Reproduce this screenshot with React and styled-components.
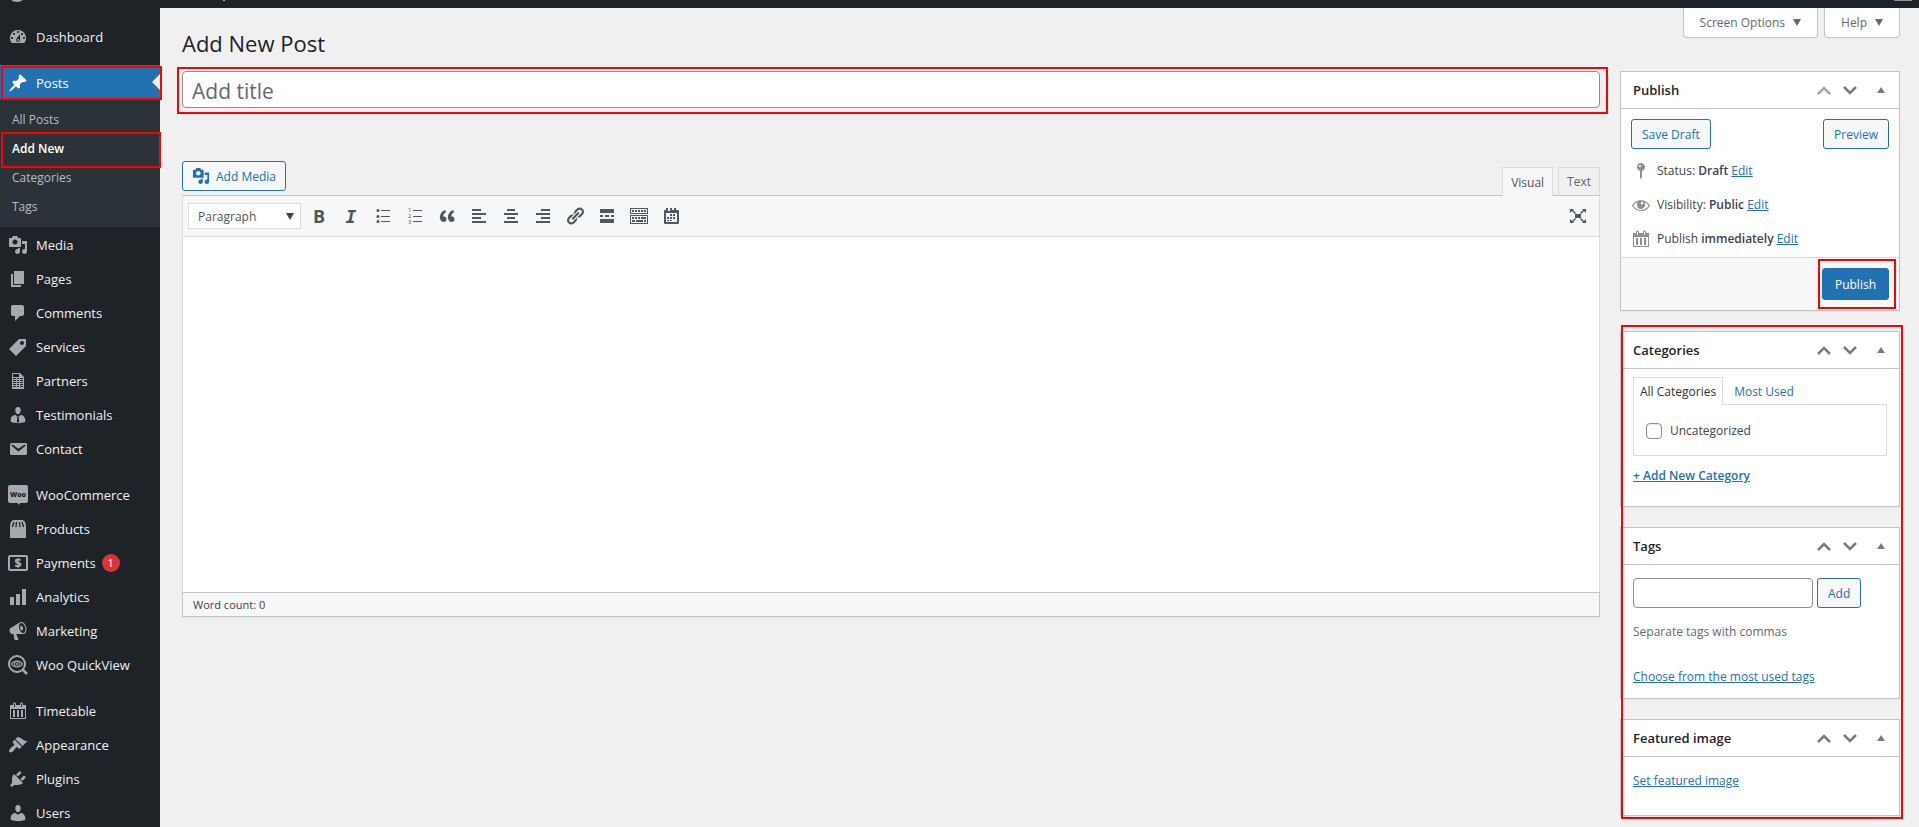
import { useState } from "react";
import styled, { createGlobalStyle, css } from "styled-components";

const BLUE = "#2271b1";
const DARK = "#1d2327";
const LINE = "#c3c4c7";
const SOFT_LINE = "#dcdcde";

const GlobalStyle = createGlobalStyle`
    * {
        box-sizing: border-box;
    }
    body {
        margin: 0;
        background-color: #f0f0f1;
        color: #3c434a;
        font-family: "Open Sans", "Noto Sans", sans-serif;
        font-size: 12px;
        line-height: 20px;
    }
    button,
    input,
    select,
    textarea {
        font-family: inherit;
        font-size: inherit;
        color: inherit;
        margin: 0;
    }
    button {
        cursor: pointer;
    }
    a {
        color: ${BLUE};
    }
    ul,
    h1,
    h2,
    p {
        margin: 0;
        padding: 0;
        list-style: none;
    }
`;

const Page = styled.div`
    height: 100vh;
    overflow: hidden;
`;

const AdminBar = styled.div`
    display: flex;
    justify-content: space-between;
    height: 8px;
    padding: 0 7px 0 10px;
    background-color: ${DARK};
    svg {
        display: block;
    }
`;

const Shell = styled.div`
    display: grid;
    grid-template-columns: 160px minmax(0, 1fr);
    align-items: start;
`;

const Sidebar = styled.nav`
    min-height: 100vh;
    padding-top: 11px;
    background-color: ${DARK};
`;

const MenuGroup = styled.ul`
    margin-bottom: 12px;
`;

const MenuItem = styled.li`
    position: relative;
`;

const MenuLink = styled.a`
    position: relative;
    display: flex;
    align-items: center;
    gap: 8px;
    height: 34px;
    padding-top: 1px;
    padding-left: 8px;
    font-size: 13px;
    text-decoration: none;
    color: ${(props) => (props.$active ? "#fff" : "#f0f0f1")};
    background-color: ${(props) => (props.$active ? BLUE : "transparent")};
    svg {
        flex: none;
        color: ${(props) => (props.$active ? "#fff" : "#a7aaad")};
    }
`;

const Notch = styled.span`
    position: absolute;
    right: 0;
    top: 9px;
    border: 8px solid transparent;
    border-right-color: #f0f0f1;
    border-left-width: 0;
`;

const Count = styled.span`
    width: 18px;
    margin-left: -2px;
    border-radius: 9px;
    background-color: #d63638;
    color: #fff;
    font-size: 11px;
    line-height: 18px;
    text-align: center;
`;

const SubMenu = styled.ul`
    padding: 6px 0;
    background-color: #2c3338;
`;

const SubItem = styled.li`
    position: relative;
    a {
        display: block;
        padding-left: 12px;
        font-size: 12px;
        line-height: 29px;
        text-decoration: none;
        color: ${(props) => (props.$current ? "#fff" : "#b5bcc2")};
        font-weight: ${(props) => (props.$current ? 600 : 400)};
    }
`;

// red frame laid over whatever it calls attention to
const Mark = styled.span`
    position: absolute;
    inset: ${(props) => props.$inset};
    border: 2px solid #f00;
    pointer-events: none;
    z-index: 2;
`;

const Marked = styled.div`
    position: relative;
`;

const Main = styled.main`
    padding: 0 19px 0 22px;
`;

const PageHead = styled.header`
    display: flex;
    justify-content: space-between;
    align-items: flex-start;
    margin-bottom: 13px;
    h1 {
        margin-top: 20px;
        font-size: 22px;
        font-weight: 400;
        line-height: 30px;
        color: ${DARK};
    }
`;

const ScreenMeta = styled.div`
    display: flex;
    gap: 6px;
`;

const MetaButton = styled.button`
    display: flex;
    align-items: center;
    gap: 8px;
    height: 30px;
    padding: 0 16px;
    border: 1px solid ${LINE};
    border-top: none;
    border-radius: 0 0 4px 4px;
    background-color: #fff;
    color: #646970;
`;

const Columns = styled.div`
    display: grid;
    grid-template-columns: minmax(0, 1fr) 280px;
    gap: 20px;
    align-items: start;
`;

const TitleInput = styled.input`
    display: block;
    width: 100%;
    height: 37px;
    padding: 2px 9px 0;
    border: 1px solid #8c8f94;
    border-radius: 4px;
    background-color: #fff;
    font-size: 21px;
    &::placeholder {
        color: #646970;
        opacity: 1;
    }
`;

const EditorTools = styled.div`
    display: flex;
    justify-content: space-between;
    align-items: flex-end;
    margin-top: 53px;
`;

const Button = styled.button`
    display: inline-flex;
    align-items: center;
    justify-content: center;
    gap: 6px;
    height: 30px;
    padding: 0 10px;
    border: 1px solid ${BLUE};
    border-radius: 3px;
    background-color: #f6f7f7;
    color: ${BLUE};
    font-size: 12px;
    ${(props) =>
        props.$primary &&
        css`
            height: 32px;
            padding: 0 12px;
            background-color: ${BLUE};
            color: #fff;
        `}
`;

const MediaButton = styled(Button)`
    margin-bottom: 4px;
    padding: 0 9px;
`;

const Tabs = styled.div`
    display: flex;
    align-items: flex-start;
    gap: 5px;
    height: 28px;
`;

const Tab = styled.button`
    position: relative;
    height: ${(props) => (props.$on ? 29 : 28)}px;
    padding: 0 8px;
    border: 1px solid ${SOFT_LINE};
    border-bottom: none;
    background-color: ${(props) => (props.$on ? "#f6f7f7" : "#f0f0f1")};
    color: ${(props) => (props.$on ? "#50575e" : "#646970")};
`;

const Editor = styled.div`
    border: 1px solid ${SOFT_LINE};
    border-top-color: ${LINE};
    border-bottom: none;
`;

const Toolbar = styled.div`
    display: flex;
    align-items: center;
    height: 41px;
    padding: 0 5px;
    border-bottom: 1px solid ${SOFT_LINE};
    background-color: #f6f7f7;
`;

const FormatField = styled.label`
    position: relative;
    display: block;
    margin-right: 2px;
    select {
        appearance: none;
        display: block;
        width: 113px;
        height: 26px;
        padding: 0 9px;
        border: 1px solid ${SOFT_LINE};
        border-radius: 0;
        background-color: #fff;
        color: #50575e;
    }
    svg {
        position: absolute;
        right: 7px;
        top: 10px;
        pointer-events: none;
    }
`;

const ToolButton = styled.button`
    display: flex;
    align-items: center;
    justify-content: center;
    width: 32px;
    height: 30px;
    padding: 0;
    border: none;
    background: none;
    color: #50575e;
    &:last-child {
        margin-left: auto;
    }
`;

const BoldGlyph = styled.span`
    font-size: 18px;
    font-weight: 700;
`;

const ItalicGlyph = styled.span`
    font-family: "DejaVu Sans Mono", monospace;
    font-size: 18px;
    font-weight: 700;
    font-style: italic;
`;

const Canvas = styled.textarea`
    display: block;
    width: 100%;
    height: 355px;
    padding: 12px;
    border: none;
    outline: none;
    resize: none;
    background-color: #fff;
`;

const StatusBar = styled.div`
    padding: 2px 10px 1px;
    border: 1px solid ${LINE};
    background-color: #f6f7f7;
    font-size: 11px;
    box-shadow: 0 1px 1px rgba(0, 0, 0, 0.04);
`;

const SideColumn = styled.div`
    display: grid;
    gap: 20px;
`;

const BoxGroup = styled(SideColumn)`
    position: relative;
`;

const Postbox = styled.section`
    border: 1px solid ${LINE};
    background-color: #fff;
    box-shadow: 0 1px 1px rgba(0, 0, 0, 0.04);
`;

const BoxHead = styled.header`
    display: flex;
    align-items: center;
    height: 37px;
    padding-left: 12px;
    border-bottom: 1px solid ${LINE};
    h2 {
        flex: 1;
        font-size: 13px;
        font-weight: 600;
        color: ${DARK};
    }
`;

const HandleButton = styled.button`
    display: flex;
    align-items: center;
    justify-content: center;
    width: ${(props) => (props.$wide ? 36 : 26)}px;
    height: 36px;
    padding: 0;
    border: none;
    background: none;
    color: #787c82;
    &:disabled {
        color: #a7aaad;
    }
`;

const PublishBody = styled.div`
    padding: 10px 10px 1px;
`;

const PublishActions = styled.div`
    display: flex;
    justify-content: space-between;
    margin-bottom: 5px;
`;

const PublishRow = styled.div`
    display: flex;
    align-items: center;
    gap: 6px;
    height: 34px;
    b {
        font-weight: 600;
    }
    svg {
        color: #8c8f94;
    }
`;

const PublishFoot = styled.footer`
    display: flex;
    justify-content: flex-end;
    padding: 10px;
    border-top: 1px solid ${SOFT_LINE};
    background-color: #f6f7f7;
`;

const CategoryBody = styled.div`
    padding: 8px 12px 20px;
`;

const CategoryTabs = styled.div`
    display: flex;
    height: 27px;
`;

const CategoryTab = styled.button`
    position: relative;
    height: 28px;
    padding: 0 6px;
    border: 1px solid ${(props) => (props.$on ? SOFT_LINE : "transparent")};
    border-bottom: none;
    background-color: ${(props) => (props.$on ? "#fff" : "transparent")};
    color: ${(props) => (props.$on ? "#2c3338" : BLUE)};
    & + & {
        margin-left: 4px;
    }
`;

const CategoryPanel = styled.div`
    display: flex;
    align-items: center;
    height: 52px;
    margin-bottom: 10px;
    padding: 2px 12px 0;
    border: 1px solid ${SOFT_LINE};
    label {
        display: flex;
        align-items: center;
        gap: 8px;
    }
`;

const AddCategory = styled.a`
    font-weight: 600;
`;

const Checkbox = styled.input`
    appearance: none;
    width: 16px;
    height: 16px;
    border: 1px solid #8c8f94;
    border-radius: 4px;
    background-color: #fff;
    box-shadow: inset 0 1px 2px rgba(0, 0, 0, 0.1);
    &:checked {
        background-color: ${BLUE};
    }
`;

const TagsBody = styled.div`
    padding: 13px 12px 11px;
`;

const TagForm = styled.div`
    display: flex;
    gap: 4px;
`;

const TagInput = styled.input`
    width: 180px;
    height: 30px;
    padding: 0 8px;
    border: 1px solid #8c8f94;
    border-radius: 4px;
    background-color: #fff;
`;

const Hint = styled.p`
    margin: 14px 0 25px;
    color: #646970;
`;

const ImageBody = styled.div`
    padding: 14px 12px 24px;
`;

const Svg = ({ size = 20, children }) => (
    <svg width={size} height={size} viewBox="0 0 20 20" fill="currentColor" aria-hidden="true">
        {children}
    </svg>
);

const PATHS = {
    dashboard:
        "M3.76 16h12.48A7.998 7.998 0 0 0 10 3a7.998 7.998 0 0 0-6.24 13zM10 4c.55 0 1 .45 1 1s-.45 1-1 1-1-.45-1-1 .45-1 1-1zM6 6c.55 0 1 .45 1 1s-.45 1-1 1-1-.45-1-1 .45-1 1-1zm8 0c.55 0 1 .45 1 1s-.45 1-1 1-1-.45-1-1 .45-1 1-1zm-5.37 5.55L12 7v6c0 1.1-.9 2-2 2s-2-.9-2-2c0-.57.24-1.08.63-1.45zM4 10c.55 0 1 .45 1 1s-.45 1-1 1-1-.45-1-1 .45-1 1-1zm12 0c.55 0 1 .45 1 1s-.45 1-1 1-1-.45-1-1 .45-1 1-1zm-5 3c0-.55-.45-1-1-1s-1 .45-1 1 .45 1 1 1 1-.45 1-1z",
    pin: "M10.44 3.02l1.82-1.82 6.36 6.35-1.83 1.82c-1.05-.68-2.48-.57-3.41.36l-.75.75c-.92.93-1.04 2.35-.35 3.41l-1.83 1.82-2.41-2.41-2.8 2.79c-.42.42-3.38 2.71-3.8 2.29s1.86-3.39 2.28-3.81l2.79-2.79L4.1 9.36l1.83-1.82c1.05.69 2.48.57 3.4-.36l.75-.75c.93-.92 1.05-2.35.36-3.41z",
    media: "M13 11V4c0-.55-.45-1-1-1h-1.67L9 1H5L3.67 3H2c-.55 0-1 .45-1 1v7c0 .55.45 1 1 1h10c.55 0 1-.45 1-1zM7 4.5c1.38 0 2.5 1.12 2.5 2.5S8.38 9.5 7 9.5 4.5 8.38 4.5 7 5.62 4.5 7 4.5zM14 6h5v10.5c0 1.38-1.12 2.5-2.5 2.5S14 17.88 14 16.5s1.12-2.5 2.5-2.5c.17 0 .34.02.5.05V9h-3V6zm-4 8.05V13h2v3.5c0 1.38-1.12 2.5-2.5 2.5S7 17.88 7 16.5 8.12 14 9.5 14c.17 0 .34.02.5.05z",
    pages: "M6 15V2h10v13H6zm-1 1h8v2H3V5h2v11z",
    comment: "M5 2h9c1.1 0 2 .9 2 2v7c0 1.1-.9 2-2 2h-2l-5 5v-5H5c-1.1 0-2-.9-2-2V4c0-1.1.9-2 2-2z",
    tag: "M11 2h7v7L8 19l-7-7zm3 6c1.1 0 2-.9 2-2s-.9-2-2-2-2 .9-2 2 .9 2 2 2z",
    sheet: "M12 2l4 4v12H4V2h8zm-1 4V3H5v3h6zM8 8V7H5v1h3zm3 0V7H9v1h2zm4 0V7h-3v1h3zm-7 2V9H5v1h3zm3 0V9H9v1h2zm4 0V9h-3v1h3zm-7 2v-1H5v1h3zm3 0v-1H9v1h2zm4 0v-1h-3v1h3zm-7 2v-1H5v1h3zm3 0v-1H9v1h2zm4 0v-1h-3v1h3zm-7 2v-1H5v1h3zm3 0v-1H9v1h2zm4 0v-1h-3v1h3z",
    user: "M10 9.25c-2.27 0-2.73-3.44-2.73-3.44C7 4.02 7.82 2 9.97 2c2.16 0 2.98 2.02 2.71 3.81 0 0-.41 3.44-2.68 3.44zm0 2.57L12.72 10c2.39 0 4.52 2.33 4.52 4.53v2.49s-3.65 1.13-7.24 1.13c-3.65 0-7.24-1.13-7.24-1.13v-2.49c0-2.25 1.94-4.48 4.47-4.48z",
    email: "M3.87 4h13.25C18.37 4 19 4.59 19 5.79v8.42c0 1.19-.63 1.79-1.88 1.79H3.87c-1.25 0-1.88-.6-1.88-1.79V5.79c0-1.2.63-1.79 1.88-1.79zm6.62 8.6l6.74-5.53c.24-.2.43-.66.13-1.07-.29-.41-.82-.42-1.17-.17l-5.7 3.86L4.8 5.83c-.35-.25-.88-.24-1.17.17-.3.41-.11.87.13 1.07z",
    chart: "M18 18V2h-4v16h4zm-6 0V7H8v11h4zm-6 0v-8H2v8h4z",
    megaphone:
        "M18.15 5.94c.46 1.62.38 3.22-.02 4.48-.42 1.28-1.26 2.18-2.3 2.48-.16.06-.26.06-.4.06-.06.02-.12.02-.18.02-.06.02-.14.02-.22.02h-6.8l2.22 5.5c.02.14-.06.26-.14.34-.08.1-.24.16-.34.16H6.95c-.1 0-.26-.06-.34-.16-.08-.08-.16-.2-.14-.34l-1-5.5H4.25l-.02-.02c-.5.06-1.08-.18-1.54-.62s-.88-1.08-1.06-1.88c-.24-.8-.2-1.56-.02-2.2.18-.62.58-1.08 1.06-1.3l.02-.02 9-5.4c.1-.06.18-.1.24-.16.06-.04.14-.08.24-.12.16-.08.28-.12.5-.18 1.04-.3 2.24.1 3.22.98s1.84 2.24 2.26 3.86zm-2.58 5.98h-.02c.4-.1.74-.34 1.04-.7.58-.7.86-1.76.86-3.04 0-.64-.1-1.3-.28-1.98-.34-1.36-1.02-2.5-1.78-3.24s-1.68-1.1-2.46-.88c-.82.22-1.4.96-1.7 2-.32 1.04-.28 2.36.06 3.72.38 1.36 1 2.5 1.8 3.24.78.74 1.62 1.1 2.48.88zm-2.54-7.08c.22-.04.42-.02.62.04.38.16.76.48 1.02 1s.42 1.2.42 1.78c0 .3-.04.56-.12.8-.18.48-.44.84-.86.94-.34.1-.8-.06-1.14-.4s-.64-.86-.78-1.5c-.18-.62-.12-1.24.02-1.72s.48-.84.82-.94z",
    calendar:
        "M15 4h3v14H2V4h3V3c0-.83.67-1.5 1.5-1.5S8 2.17 8 3v1h4V3c0-.83.67-1.5 1.5-1.5S15 2.17 15 3v1zM6 3v2.5c0 .28.22.5.5.5s.5-.22.5-.5V3c0-.28-.22-.5-.5-.5S6 2.72 6 3zm7 0v2.5c0 .28.22.5.5.5s.5-.22.5-.5V3c0-.28-.22-.5-.5-.5s-.5.22-.5.5zm4 14V8H3v9h14zM7 16V9H5v7h2zm4 0V9H9v7h2zm4 0V9h-2v7h2z",
    brush: "M14.48 11.06L7.41 3.99l1.5-1.5c.5-.56 2.3-.47 3.51.32 1.21.8 1.43 1.28 2.91 2.1 1.18.64 2.45 1.26 4.45.85zm-.71.71L6.7 4.7 4.93 6.47c-.39.39-.39 1.02 0 1.41l1.06 1.06c.39.39.39 1.03 0 1.42-.6.6-1.43 1.11-2.21 1.69-.35.26-.7.53-1.01.84C1.43 14.23.4 16.08 1.4 17.07c.99 1 2.84-.03 4.18-1.36.31-.31.58-.66.85-1.02.57-.78 1.08-1.61 1.69-2.21.39-.39 1.02-.39 1.41 0l1.06 1.06c.39.39 1.02.39 1.41 0z",
    plug: "M13.11 4.36L9.87 7.6 8 5.73l3.24-3.24c.35-.34 1.05-.2 1.56.32.52.51.66 1.21.31 1.55zm-8 1.77l.91-1.12 9.01 9.01-1.19.84c-.71.71-2.63 1.16-3.82 1.16H6.14L4.9 17.26c-.59.59-1.54.59-2.12 0-.59-.58-.59-1.53 0-2.12l1.24-1.24v-3.88c0-1.13.4-3.19 1.09-3.89zm7.26 3.97l3.24-3.24c.34-.35 1.04-.21 1.55.31.52.51.66 1.21.31 1.55l-3.24 3.25z",
    eye: "M18.3 9.5C15 4.9 8.5 3.8 3.9 7.2c-1.2.9-2.2 2.1-3 3.4.2.4.5.8.8 1.2 3.3 4.6 9.6 5.6 14.2 2.4.9-.7 1.7-1.4 2.4-2.4.3-.4.5-.8.8-1.2-.3-.4-.5-.8-.8-1.1zm-8.2-2.3c.5-.5 1.3-.5 1.8 0s.5 1.3 0 1.8-1.3.5-1.8 0-.5-1.3 0-1.8zm-.1 7.7c-3.1 0-6-1.6-7.7-4.2C3.5 9 5.1 7.8 7 7.2c-.7.8-1 1.7-1 2.7 0 2.2 1.7 4.1 4 4.1 2.2 0 4.1-1.7 4.1-4v-.1c0-1-.4-2-1.1-2.7 1.9.6 3.5 1.8 4.7 3.5-1.7 2.6-4.6 4.2-7.7 4.2z",
    status: "M14 6c0 1.86-1.28 3.41-3 3.86V16c0 1-2 2-2 2V9.86c-1.72-.45-3-2-3-3.86 0-2.21 1.79-4 4-4s4 1.79 4 4zM8 5c0 .55.45 1 1 1s1-.45 1-1-.45-1-1-1-1 .45-1 1z",
    quote: "M9.49 13.22c0-.74-.2-1.38-.61-1.9-.62-.78-1.83-.88-2.53-.72-.29-1.65 1.11-3.75 2.92-4.65L7.88 4c-2.73 1.3-5.42 4.28-4.96 8.05C3.21 14.43 4.59 16 6.54 16c.85 0 1.56-.25 2.12-.75s.83-1.18.83-2.03zm8.05 0c0-.74-.2-1.38-.61-1.9-.63-.78-1.83-.88-2.53-.72-.29-1.65 1.11-3.75 2.92-4.65L15.93 4c-2.73 1.3-5.41 4.28-4.95 8.05.29 2.38 1.66 3.95 3.61 3.95.85 0 1.56-.25 2.12-.75s.83-1.18.83-2.03z",
    alignLeft: "M12 5V3H3v2h9zm5 4V7H3v2h14zm-5 4v-2H3v2h9zm5 4v-2H3v2h14z",
    alignCenter: "M14 5V3H6v2h8zm3 4V7H3v2h14zm-3 4v-2H6v2h8zm3 4v-2H3v2h14z",
    alignRight: "M17 5V3H8v2h9zm0 4V7H3v2h14zm0 4v-2H8v2h9zm0 4v-2H3v2h14z",
    link: "M17.74 2.76c1.68 1.69 1.68 4.41 0 6.1l-1.53 1.52c-1.12 1.12-2.7 1.47-4.14 1.09l2.62-2.61.76-.77.76-.76c.84-.84.84-2.2 0-3.04-.84-.85-2.2-.85-3.04 0l-.77.76-3.38 3.38c-.37-1.44-.02-3.02 1.1-4.14l1.52-1.53c1.69-1.68 4.42-1.68 6.1 0zM8.59 13.43l5.34-5.34c.42-.42.42-1.1 0-1.52-.44-.43-1.13-.39-1.53 0l-5.33 5.34c-.42.42-.42 1.1 0 1.52.44.43 1.13.39 1.52 0zm-.76 2.29l4.14-4.15c.38 1.44.03 3.02-1.09 4.14l-1.52 1.53c-1.69 1.68-4.41 1.68-6.1 0-1.68-1.68-1.68-4.42 0-6.1l1.53-1.52c1.12-1.12 2.7-1.47 4.14-1.1l-4.14 4.15c-.85.84-.85 2.2 0 3.05.84.84 2.2.84 3.04 0z",
    more: "M17 7V3H3v4h14zM6 11V9H3v2h3zm6 0V9H8v2h4zm5 0V9h-3v2h3zm0 6v-4H3v4h14z",
    keyboard:
        "M19 2v6H1V2h18zm-1 5V3H2v4h16zM5 4v2H3V4h2zm3 0v2H6V4h2zm3 0v2H9V4h2zm3 0v2h-2V4h2zm3 0v2h-2V4h2zm2 5v9H1V9h18zm-1 8v-7H2v7h16zM5 11v2H3v-2h2zm3 0v2H6v-2h2zm3 0v2H9v-2h2zm6 0v2h-5v-2h5zM6 14v2H3v-2h3zm8 0v2H7v-2h7zm3 0v2h-2v-2h2z",
};

const Icon = ({ name, size }) => (
    <Svg size={size}>
        <path fillRule="evenodd" d={PATHS[name]} />
    </Svg>
);

const BusinessIcon = () => (
    <Svg>
        <path d={PATHS.user} />
        <path d="M8.500 10.800L10 12l1.500-1.200-.8 1.800.5 4.200L10 18l-1.200-1.200.5-4.200z" fill={DARK} />
    </Svg>
);

const WooIcon = () => (
    <Svg>
        <path d="M2 0h16a2 2 0 0 1 2 2v14a2 2 0 0 1-2 2h-6l-1 2-1.500-2H2a2 2 0 0 1-2-2V2a2 2 0 0 1 2-2z" />
        <text x="10" y="12" textAnchor="middle" fontSize="7" fontWeight="800" fill={DARK}>
            Woo
        </text>
    </Svg>
);

const StoreIcon = () => (
    <Svg>
        <path d="M6 1h8c2.500 0 3.500 2 4 6v12H2V7c.5-4 1.500-6 4-6z" />
        <path
            d="M5.800 3.500L4.500 7.500M8.500 3.500L8 7.500M11.500 3.500l.5 4M14.200 3.500l1.300 4"
            fill="none"
            stroke={DARK}
            strokeWidth="1.300"
            strokeLinecap="round"
        />
    </Svg>
);

const MoneyIcon = () => (
    <Svg>
        <rect x="1" y="3" width="18" height="14" rx="1" fill="none" stroke="currentColor" strokeWidth="2" />
        <text x="10" y="14" textAnchor="middle" fontSize="12" fontWeight="800">
            $
        </text>
    </Svg>
);

const QuickViewIcon = () => (
    <Svg>
        <circle cx="9" cy="9" r="8" fill="none" stroke="currentColor" strokeWidth="2" />
        <path d="M15 15l4 4" stroke="currentColor" strokeWidth="2.500" />
        <path d="M3.500 9C6.500 5 11.500 5 14.500 9 11.500 13 6.500 13 3.500 9z" fill="none" stroke="currentColor" strokeWidth="1.200" />
        <circle cx="9" cy="9" r="2.500" fill="none" stroke="currentColor" />
        <circle cx="9" cy="9" r="1" />
    </Svg>
);

const BulletIcon = () => (
    <Svg>
        <circle cx="5" cy="4.500" r="1.500" />
        <circle cx="5" cy="10.500" r="1.500" />
        <circle cx="5" cy="15.500" r="1.500" />
        <path d="M8 4h9v1H8zM8 10h9v1H8zM8 15h9v1H8z" />
    </Svg>
);

const NumberIcon = () => (
    <Svg>
        {[1, 2, 3].map((n) => (
            <text key={n} x="3" y={n * 6} fontSize="6">
                {n}
            </text>
        ))}
        <path d="M8 4h9v1H8zM8 10h9v1H8zM8 15h9v1H8z" />
    </Svg>
);

const EventIcon = () => (
    <Svg>
        <path
            fillRule="evenodd"
            d="M4 4h1V2h2v3h2V4h0V2h2v2h2V2h2v2h2v0a1 1 0 0 1 1 1v12a1 1 0 0 1-1 1H4a1 1 0 0 1-1-1V5a1 1 0 0 1 1-1zM5 7v9h11V7zM9 8h2v2H9zM12 8h2v2h-2zM6 11h2v2H6zM9 11h2v2H9zM12 11h2v2h-2zM6 14h2v1H6zM9 14h2v1H9z"
        />
    </Svg>
);

const ExpandIcon = () => (
    <Svg>
        <path d="M7 8h6v4H7zM2 3h4L5 4l3 3-1 1-3-3-2 2zM18 3h-4l1 1-3 3 1 1 3-3 2 2zM2 17h4l-1-1 3-3-1-1-3 3-2-2zM18 17h-4l1-1-3-3 1-1 3 3 2-2z" />
    </Svg>
);

const Caret = ({ up }) => (
    <svg width="8" height="7" viewBox="0 0 8 7" fill="currentColor" aria-hidden="true">
        <path d={up ? "M4 0l4 6H0z" : "M0 0h8L4 7z"} />
    </svg>
);

const Chevron = ({ up }) => (
    <svg width="14" height="9" viewBox="0 0 14 9" fill="none" stroke="currentColor" strokeWidth="2.500" aria-hidden="true">
        <path d={up ? "M1 8l6-6 6 6" : "M1 1l6 6 6-6"} />
    </svg>
);

const MENU = [
    [{ label: "Dashboard", icon: <Icon name="dashboard" /> }],
    [
        { label: "Posts", icon: <Icon name="pin" />, children: ["All Posts", "Add New", "Categories", "Tags"] },
        { label: "Media", icon: <Icon name="media" /> },
        { label: "Pages", icon: <Icon name="pages" /> },
        { label: "Comments", icon: <Icon name="comment" /> },
        { label: "Services", icon: <Icon name="tag" /> },
        { label: "Partners", icon: <Icon name="sheet" /> },
        { label: "Testimonials", icon: <BusinessIcon /> },
        { label: "Contact", icon: <Icon name="email" /> },
    ],
    [
        { label: "WooCommerce", icon: <WooIcon /> },
        { label: "Products", icon: <StoreIcon /> },
        { label: "Payments", icon: <MoneyIcon />, count: 1 },
        { label: "Analytics", icon: <Icon name="chart" /> },
        { label: "Marketing", icon: <Icon name="megaphone" /> },
        { label: "Woo QuickView", icon: <QuickViewIcon /> },
    ],
    [
        { label: "Timetable", icon: <Icon name="calendar" /> },
        { label: "Appearance", icon: <Icon name="brush" /> },
        { label: "Plugins", icon: <Icon name="plug" /> },
        { label: "Users", icon: <Icon name="user" /> },
    ],
];

const TOOLS = [
    ["Bold", <BoldGlyph>B</BoldGlyph>],
    ["Italic", <ItalicGlyph>I</ItalicGlyph>],
    ["Bulleted list", <BulletIcon />],
    ["Numbered list", <NumberIcon />],
    ["Blockquote", <Icon name="quote" />],
    ["Align left", <Icon name="alignLeft" />],
    ["Align center", <Icon name="alignCenter" />],
    ["Align right", <Icon name="alignRight" />],
    ["Insert link", <Icon name="link" />],
    ["Read more", <Icon name="more" />],
    ["Toolbar toggle", <Icon name="keyboard" />],
    ["Timetable", <EventIcon />],
    ["Fullscreen", <ExpandIcon />],
];

const Box = ({ title, first, children }) => (
    <Postbox>
        <BoxHead>
            <h2>{title}</h2>
            <HandleButton aria-label={`Move ${title} up`} disabled={first}>
                <Chevron up />
            </HandleButton>
            <HandleButton aria-label={`Move ${title} down`}>
                <Chevron />
            </HandleButton>
            <HandleButton aria-label={`Toggle ${title}`} $wide>
                <Caret up />
            </HandleButton>
        </BoxHead>
        {children}
    </Postbox>
);

function SideMenu() {
    return (
        <Sidebar>
            {MENU.map((group) => (
                <MenuGroup key={group[0].label}>
                    {group.map((item) => (
                        <MenuItem key={item.label}>
                            <MenuLink href="#" $active={!!item.children}>
                                {item.icon}
                                {item.label}
                                {item.count && <Count>{item.count}</Count>}
                                {item.children && <Notch />}
                                {item.children && <Mark $inset="1px -2px -1px 1px" />}
                            </MenuLink>
                            {item.children && (
                                <SubMenu>
                                    {item.children.map((name) => (
                                        <SubItem key={name} $current={name === "Add New"}>
                                            <a href="#">{name}</a>
                                            {name === "Add New" && <Mark $inset="-2px -1px -5px 1px" />}
                                        </SubItem>
                                    ))}
                                </SubMenu>
                            )}
                        </MenuItem>
                    ))}
                </MenuGroup>
            ))}
        </Sidebar>
    );
}

function App() {
    const [title, setTitle] = useState("");
    const [content, setContent] = useState("");
    const words = content.split(/\s+/).filter(Boolean).length;

    return (
        <Page>
            <GlobalStyle />
            <AdminBar>
                <svg width="220" height="8" fill="none" aria-hidden="true">
                    <circle cx="7" cy="-8" r="9" stroke="#a7aaad" strokeWidth="2" />
                    <path d="M213 0h2v1h-2z" fill="#a7aaad" />
                </svg>
                <svg width="18" height="8" aria-hidden="true">
                    <path d="M0 0h18v1H0z" fill="#8c8f94" />
                </svg>
            </AdminBar>
            <Shell>
                <SideMenu />
                <Main>
                    <PageHead>
                        <h1>Add New Post</h1>
                        <ScreenMeta>
                            <MetaButton>
                                Screen Options <Caret />
                            </MetaButton>
                            <MetaButton>
                                Help <Caret />
                            </MetaButton>
                        </ScreenMeta>
                    </PageHead>
                    <Columns>
                        <div>
                            <Marked>
                                <TitleInput
                                    aria-label="Add title"
                                    placeholder="Add title"
                                    value={title}
                                    onChange={(e) => setTitle(e.target.value)}
                                />
                                <Mark $inset="-4px -8px -6px -5px" />
                            </Marked>
                            <EditorTools>
                                <MediaButton>
                                    <Icon name="media" size={18} />
                                    Add Media
                                </MediaButton>
                                <Tabs>
                                    <Tab $on>Visual</Tab>
                                    <Tab>Text</Tab>
                                </Tabs>
                            </EditorTools>
                            <Editor>
                                <Toolbar>
                                    <FormatField>
                                        <select aria-label="Format" defaultValue="Paragraph">
                                            <option>Paragraph</option>
                                        </select>
                                        <Caret />
                                    </FormatField>
                                    {TOOLS.map(([name, glyph]) => (
                                        <ToolButton key={name} aria-label={name}>
                                            {glyph}
                                        </ToolButton>
                                    ))}
                                </Toolbar>
                                <Canvas
                                    aria-label="Content"
                                    value={content}
                                    onChange={(e) => setContent(e.target.value)}
                                />
                            </Editor>
                            <StatusBar>Word count: {words}</StatusBar>
                        </div>
                        <SideColumn>
                            <Box title="Publish" first>
                                <PublishBody>
                                    <PublishActions>
                                        <Button>Save Draft</Button>
                                        <Button>Preview</Button>
                                    </PublishActions>
                                    <PublishRow>
                                        <Icon name="status" />
                                        <span>
                                            Status: <b>Draft</b> <a href="#">Edit</a>
                                        </span>
                                    </PublishRow>
                                    <PublishRow>
                                        <Icon name="eye" />
                                        <span>
                                            Visibility: <b>Public</b> <a href="#">Edit</a>
                                        </span>
                                    </PublishRow>
                                    <PublishRow>
                                        <Icon name="calendar" />
                                        <span>
                                            Publish <b>immediately</b> <a href="#">Edit</a>
                                        </span>
                                    </PublishRow>
                                </PublishBody>
                                <PublishFoot>
                                    <Marked>
                                        <Button $primary>Publish</Button>
                                        <Mark $inset="-9px -7px -9px -4px" />
                                    </Marked>
                                </PublishFoot>
                            </Box>
                            <BoxGroup>
                                <Mark $inset="-6px -3px -3px 1px" />
                                <Box title="Categories">
                                    <CategoryBody>
                                        <CategoryTabs>
                                            <CategoryTab $on>All Categories</CategoryTab>
                                            <CategoryTab>Most Used</CategoryTab>
                                        </CategoryTabs>
                                        <CategoryPanel>
                                            <label>
                                                <Checkbox type="checkbox" />
                                                Uncategorized
                                            </label>
                                        </CategoryPanel>
                                        <AddCategory href="#">+ Add New Category</AddCategory>
                                    </CategoryBody>
                                </Box>
                                <Box title="Tags">
                                    <TagsBody>
                                        <TagForm>
                                            <TagInput aria-label="Add tag" />
                                            <Button>Add</Button>
                                        </TagForm>
                                        <Hint>Separate tags with commas</Hint>
                                        <a href="#">Choose from the most used tags</a>
                                    </TagsBody>
                                </Box>
                                <Box title="Featured image">
                                    <ImageBody>
                                        <a href="#">Set featured image</a>
                                    </ImageBody>
                                </Box>
                            </BoxGroup>
                        </SideColumn>
                    </Columns>
                </Main>
            </Shell>
        </Page>
    );
}

export default App;
